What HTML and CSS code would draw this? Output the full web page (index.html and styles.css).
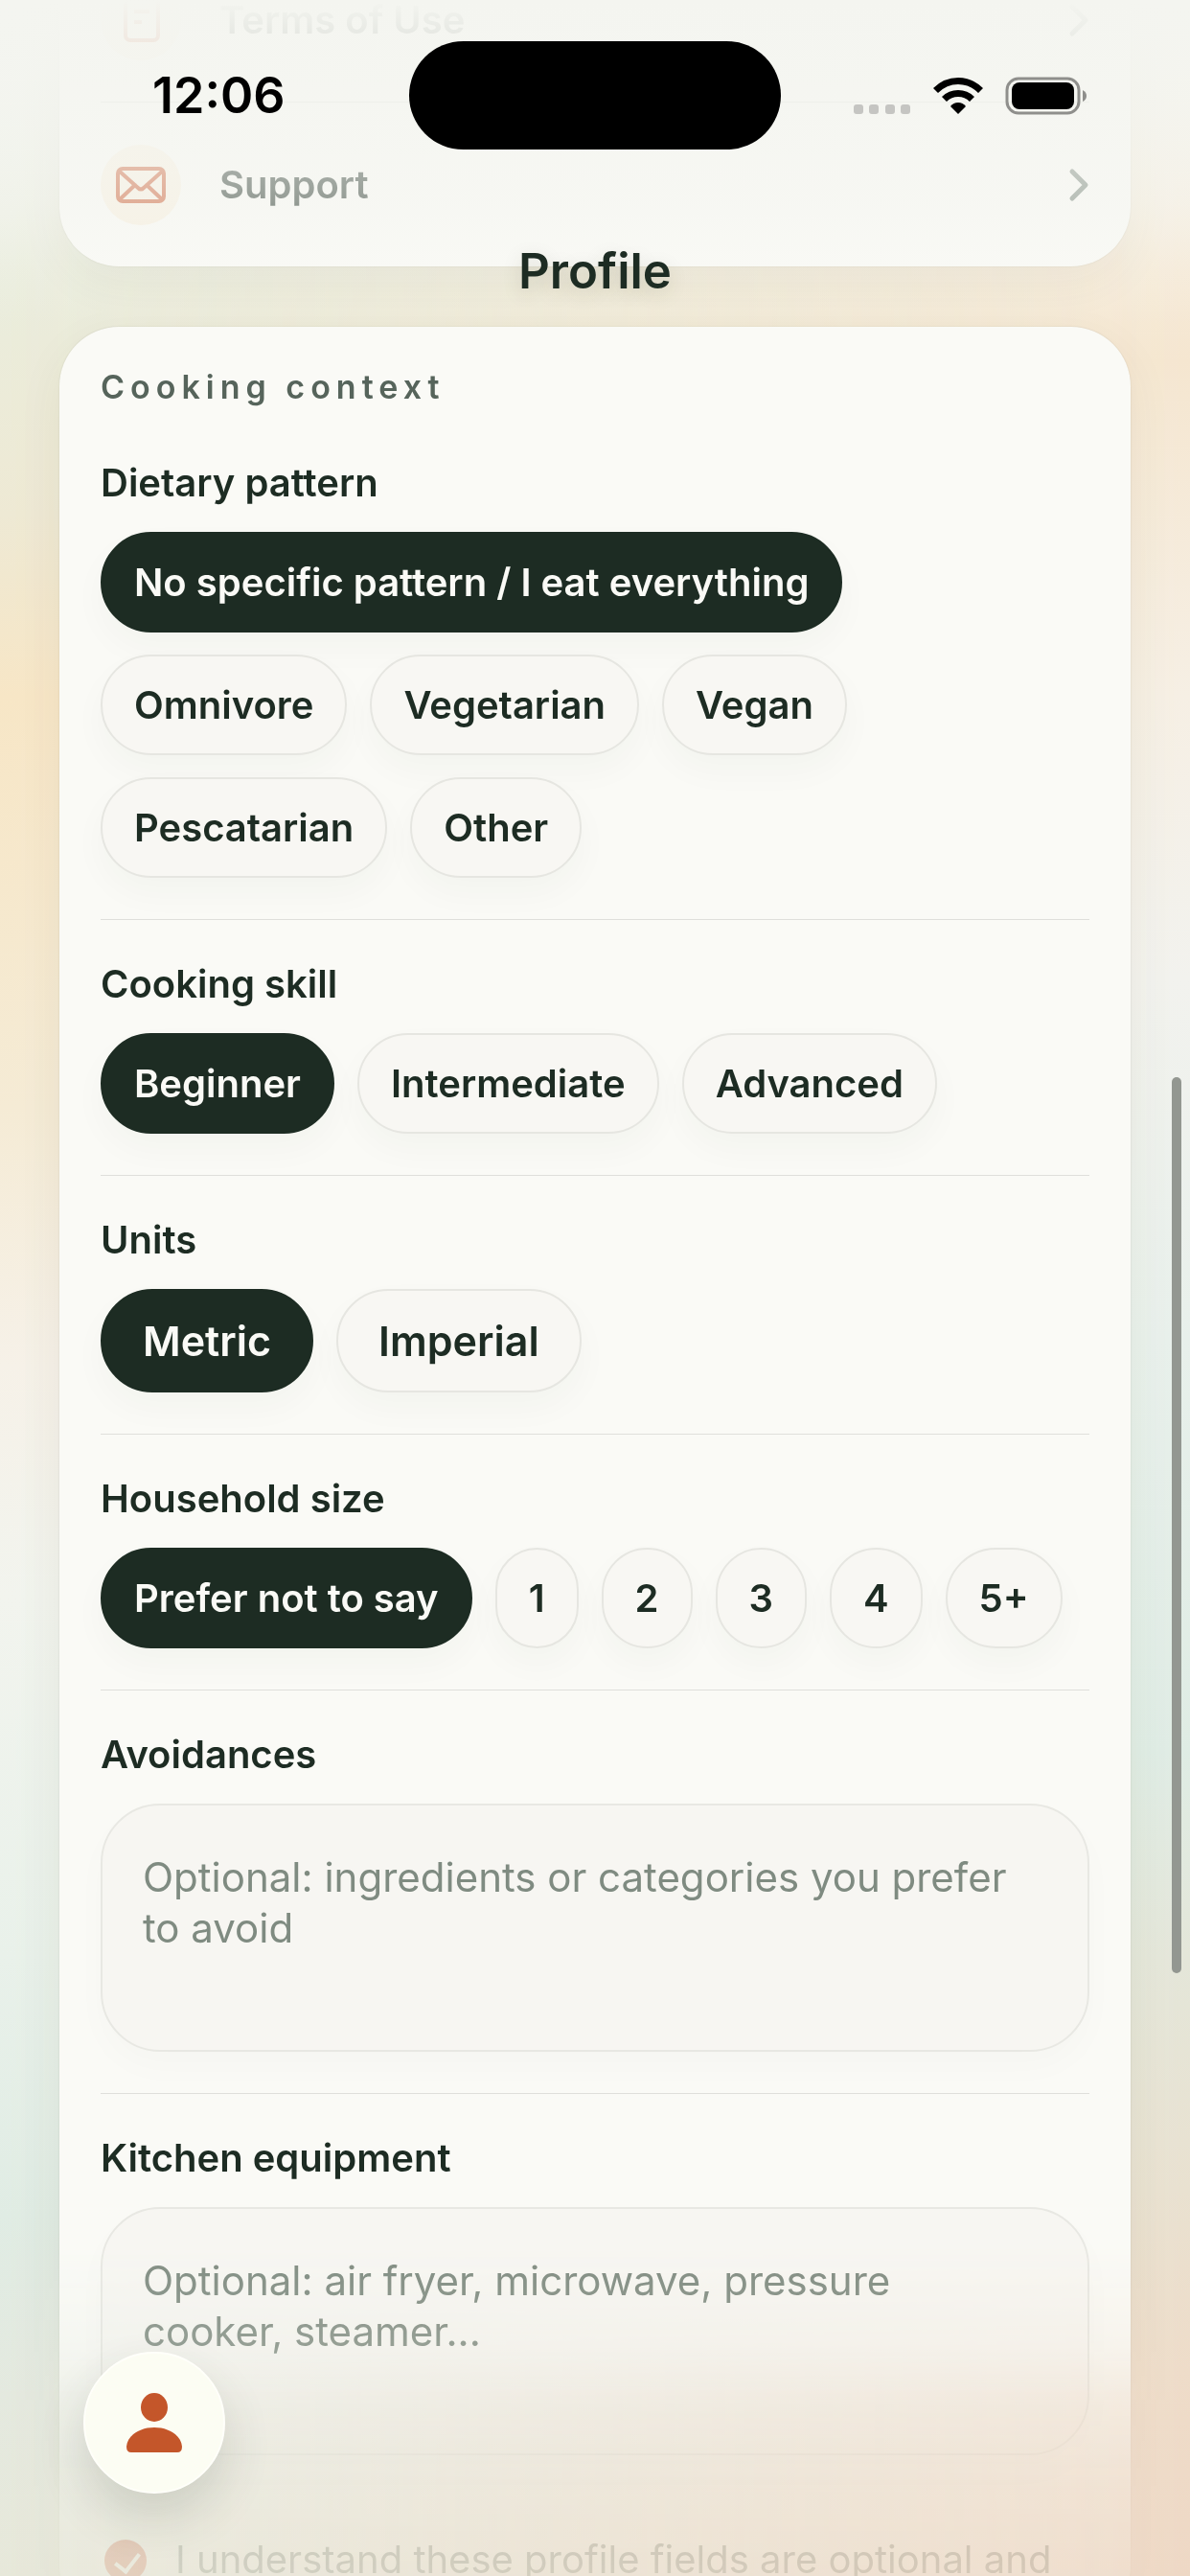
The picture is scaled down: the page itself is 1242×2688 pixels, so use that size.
FILE: index.html
```html
<!DOCTYPE html>
<html lang="en">
<head>
    <meta charset="UTF-8">
    <meta name="viewport" content="width=device-width, initial-scale=1.0">
    <title>Profile</title>
    <link rel="stylesheet" href="styles.css">
</head>
<body>
    <div class="screen">
        <main class="content">
            <nav class="card links">
                <a class="link-row" href="#terms">
                    <span class="link-icon">
                        <svg width="54" height="54" viewBox="0 0 54 54" fill="none" stroke="currentColor" stroke-width="4" stroke-linejoin="round">
                            <rect x="11" y="5" width="34" height="43" rx="5"/>
                            <path d="M20 18h16M20 29h8"/>
                        </svg>
                    </span>
                    <span class="link-text">Terms of Use</span>
                    <svg class="chevron" width="22" height="36" viewBox="0 0 22 36"><path d="M4 4l14 14L4 32"/></svg>
                </a>
                <a class="link-row" href="#support">
                    <span class="link-icon">
                        <svg width="54" height="54" viewBox="0 0 54 54" fill="none" stroke="currentColor" stroke-width="4" stroke-linejoin="round" stroke-linecap="round">
                            <rect x="3" y="10" width="48" height="34" rx="5"/>
                            <path d="M5 13l19 17q3 3 6 0l19-17M5 42l16-15M49 42L33 27"/>
                        </svg>
                    </span>
                    <span class="link-text">Support</span>
                    <svg class="chevron" width="22" height="36" viewBox="0 0 22 36"><path d="M4 4l14 14L4 32"/></svg>
                </a>
            </nav>

            <form class="card context">
                <h2>Cooking context</h2>

                <section class="field">
                    <h3>Dietary pattern</h3>
                    <div class="chips diet">
                        <button type="button" class="chip selected">No specific pattern / I eat everything</button>
                        <button type="button" class="chip">Omnivore</button>
                        <button type="button" class="chip">Vegetarian</button>
                        <button type="button" class="chip">Vegan</button>
                        <button type="button" class="chip">Pescatarian</button>
                        <button type="button" class="chip">Other</button>
                    </div>
                </section>

                <section class="field">
                    <h3>Cooking skill</h3>
                    <div class="chips">
                        <button type="button" class="chip selected">Beginner</button>
                        <button type="button" class="chip">Intermediate</button>
                        <button type="button" class="chip">Advanced</button>
                    </div>
                </section>

                <section class="field">
                    <h3>Units</h3>
                    <div class="chips">
                        <button type="button" class="chip large selected">Metric</button>
                        <button type="button" class="chip large">Imperial</button>
                    </div>
                </section>

                <section class="field">
                    <h3>Household size</h3>
                    <div class="chips">
                        <button type="button" class="chip selected">Prefer not to say</button>
                        <button type="button" class="chip">1</button>
                        <button type="button" class="chip">2</button>
                        <button type="button" class="chip">3</button>
                        <button type="button" class="chip">4</button>
                        <button type="button" class="chip">5+</button>
                    </div>
                </section>

                <section class="field">
                    <label for="avoidances">Avoidances</label>
                    <textarea id="avoidances" placeholder="Optional: ingredients or categories you prefer to avoid"></textarea>
                </section>

                <section class="field">
                    <label for="equipment">Kitchen equipment</label>
                    <textarea id="equipment" placeholder="Optional: air fryer, microwave, pressure cooker, steamer..."></textarea>
                </section>

                <div class="consent">
                    <input type="checkbox" id="consent" checked>
                    <label for="consent">I understand these profile fields are optional and</label>
                </div>
            </form>
        </main>

        <header class="top">
            <div class="status">
                <span class="time">12:06</span>
                <span class="island"></span>
                <span class="signals">
                    <svg width="60" height="40" viewBox="0 0 60 40" fill="#c5c5c2">
                        <rect x="0" y="29" width="10" height="10" rx="3"/>
                        <rect x="16" y="29" width="10" height="10" rx="3"/>
                        <rect x="33" y="29" width="10" height="10" rx="3"/>
                        <rect x="49" y="29" width="10" height="10" rx="3"/>
                    </svg>
                    <svg width="52" height="40" viewBox="0 0 52 40">
                        <path d="M0 12Q11 1 26 1T52 12L47 17Q38 8 26 8T5 17Z"/>
                        <path d="M9 21Q16 14 26 14T43 21L38 26Q33 21 26 21T14 26Z"/>
                        <path d="M18 31Q21 27 26 27T34 31L26 39Z"/>
                    </svg>
                    <svg width="86" height="40" viewBox="0 0 86 40">
                        <rect x="2" y="2" width="75" height="36" rx="12" fill="none" stroke="#8f8f8c" stroke-width="3"/>
                        <rect x="7" y="6" width="65" height="28" rx="8"/>
                        <path d="M81 14q4 2 4 6t-4 6z" fill="#8f8f8c"/>
                    </svg>
                </span>
            </div>
            <h1>Profile</h1>
        </header>

        <button type="button" class="fab" aria-label="Profile">
            <svg width="60" height="64" viewBox="0 0 60 64" fill="currentColor">
                <ellipse cx="30" cy="16" rx="14" ry="15"/>
                <path d="M1 57C2 45 15 37 30 37s28 8 29 20q0 6-5 6H6q-5 0-5-6z"/>
            </svg>
        </button>
        <div class="scrollbar"></div>
    </div>
</body>
</html>
```

FILE: styles.css
```css
* {
    box-sizing: border-box;
}
body {
    margin: 0;
    font-family: Inter, "Liberation Sans", sans-serif;
    color: #1d2c23;
}
h1, h2, h3 {
    margin: 0;
}
button, textarea {
    font-family: inherit;
    color: inherit;
}

.screen {
    position: relative;
    height: 100vh;
    overflow: hidden;
    background: linear-gradient(to bottom, #f2f5f1 0%, #eaeddd 11%, #eee9d4 20%, #f7e6c6 27%, #f5ebd5 43%, #f6f1e8 53%, #f2f4ee 62%, #e9f1ea 76%, #e0ece4 86%, #e4e9df 93%, #e7e8da 100%);
}
/* warm right side, blended in across the width */
.screen::before {
    content: "";
    position: absolute;
    inset: 0;
    background: linear-gradient(to bottom, #f4f3ee 0%, #f7eedf 7%, #f5e6d0 14%, #f6efe4 27%, #f2f2ee 38%, #e8f0eb 52%, #dfece4 68%, #e4e6d9 76%, #e9e1d0 85%, #eedcc9 92%, #eed8c5 100%);
    -webkit-mask-image: linear-gradient(to right, transparent, #000);
    mask-image: linear-gradient(to right, transparent, #000);
}

.content {
    position: relative;
    height: 100%;
    padding: 0 62px;
    overflow: hidden;
    -webkit-mask-image: linear-gradient(to top, rgba(0, 0, 0, 0.16) 0, rgba(0, 0, 0, 0.24) 90px, rgba(0, 0, 0, 0.48) 180px, rgba(0, 0, 0, 0.78) 240px, #000 350px);
    mask-image: linear-gradient(to top, rgba(0, 0, 0, 0.16) 0, rgba(0, 0, 0, 0.24) 90px, rgba(0, 0, 0, 0.48) 180px, rgba(0, 0, 0, 0.78) 240px, #000 350px);
}
.card {
    padding: 0 43px;
    border-radius: 62px;
    background-color: #fafaf6;
    box-shadow: 0 16px 50px rgba(60, 60, 30, 0.06), 0 0 2px rgba(60, 60, 30, 0.15);
}

/* list is scrolled partly out of view */
.links {
    margin-top: -65px;
}
.link-row {
    display: flex;
    align-items: center;
    gap: 40px;
    height: 171px;
    color: inherit;
    text-decoration: none;
}
.link-row + .link-row {
    height: 172px;
    border-top: 1px solid #dadad4;
}
.link-icon {
    display: flex;
    align-items: center;
    justify-content: center;
    width: 84px;
    height: 84px;
    border-radius: 50%;
    background-color: #f8f0e0;
    color: #c9572c;
}
.link-text {
    flex: 1;
    font-size: 40px;
    font-weight: 600;
}
.chevron {
    fill: none;
    stroke: #6d7b71;
    stroke-width: 5;
    stroke-linecap: round;
    stroke-linejoin: round;
}

.context {
    margin-top: 63px;
    padding-top: 43px;
    padding-bottom: 43px;
}
.context h2 {
    margin-bottom: 56px;
    font-size: 34px;
    line-height: 40px;
    font-weight: 600;
    letter-spacing: 6px;
    color: #56645b;
}
.field {
    display: flex;
    flex-direction: column;
    gap: 27px;
    padding-bottom: 43px;
}
.field + .field {
    padding-top: 43px;
    border-top: 1px solid #dfdfdb;
}
.field h3, .field label {
    font-size: 40px;
    line-height: 48px;
    font-weight: 600;
}
.chips {
    display: flex;
    flex-wrap: wrap;
    gap: 23px 24px;
}
.diet {
    padding-right: 200px;
}
.chip {
    height: 105px;
    padding: 0 33px;
    border: 2px solid #e6e6e1;
    border-radius: 53px;
    background-color: #f8f7f3;
    box-shadow: 0 16px 36px rgba(40, 50, 40, 0.03);
    font-size: 40px;
    font-weight: 600;
}
.chip.large {
    height: 108px;
    border-radius: 54px;
    padding: 0 42px;
    font-size: 43px;
}
.chip.selected {
    border-color: #1d2c23;
    background-color: #1d2c23;
    color: #fafaf6;
}
textarea {
    display: block;
    width: 100%;
    height: 259px;
    padding: 48px 60px 48px 42px;
    border: 2px solid #e8e8e3;
    border-radius: 62px;
    background-color: #f7f6f2;
    box-shadow: 0 16px 36px rgba(40, 50, 40, 0.02);
    font-size: 42px;
    line-height: 53px;
    resize: none;
}
textarea::placeholder {
    color: #7f8b81;
    opacity: 1;
}

.consent {
    display: flex;
    align-items: flex-start;
    gap: 30px;
    padding-top: 39px;
}
.consent input {
    flex: none;
    appearance: none;
    position: relative;
    width: 44px;
    height: 44px;
    margin: 6px 0 0 4px;
    border-radius: 50%;
    background-color: #cf5a36;
}
.consent input:checked::after {
    content: "";
    position: absolute;
    left: 16px;
    top: 9px;
    width: 12px;
    height: 21px;
    border: solid #fafaf6;
    border-width: 0 4px 4px 0;
    transform: rotate(38deg);
}
.consent label {
    font-size: 40px;
    line-height: 53px;
    color: #5d6b62;
}

.top {
    position: absolute;
    top: 0;
    left: 0;
    right: 0;
    height: 340px;
    padding-top: 43px;
    background: linear-gradient(to bottom, rgba(244, 245, 240, 1) 0, rgba(244, 245, 240, 0.94) 34px, rgba(244, 245, 240, 0.8) 110px, rgba(244, 245, 240, 0.56) 210px, rgba(244, 245, 240, 0.18) 280px, rgba(244, 245, 240, 0) 340px);
}
.status {
    display: grid;
    grid-template-columns: 1fr 388px 1fr;
    align-items: center;
    height: 113px;
    color: #000;
}
.time {
    padding-left: 159px;
    font-size: 52px;
    font-weight: 600;
}
.island {
    height: 113px;
    border-radius: 57px;
    background-color: #000;
}
.signals {
    display: flex;
    justify-content: flex-end;
    gap: 23px;
    padding-right: 107px;
}
.top h1 {
    margin-top: 97px;
    font-size: 51px;
    line-height: 60px;
    font-weight: 600;
    text-align: center;
    text-shadow: 0 6px 20px rgba(60, 60, 30, 0.15);
}

.fab {
    position: absolute;
    left: 87px;
    bottom: 86px;
    display: flex;
    align-items: center;
    justify-content: center;
    width: 148px;
    height: 148px;
    padding: 0;
    border: 2px solid #fffffa;
    border-radius: 50%;
    background-color: #fcfdf3;
    box-shadow: 0 24px 50px rgba(50, 60, 50, 0.16);
    color: #c4562a;
}
.scrollbar {
    position: absolute;
    right: 9px;
    top: 41.8%;
    width: 10px;
    height: 34.8%;
    border-radius: 5px;
    background-color: #939791;
}
```
